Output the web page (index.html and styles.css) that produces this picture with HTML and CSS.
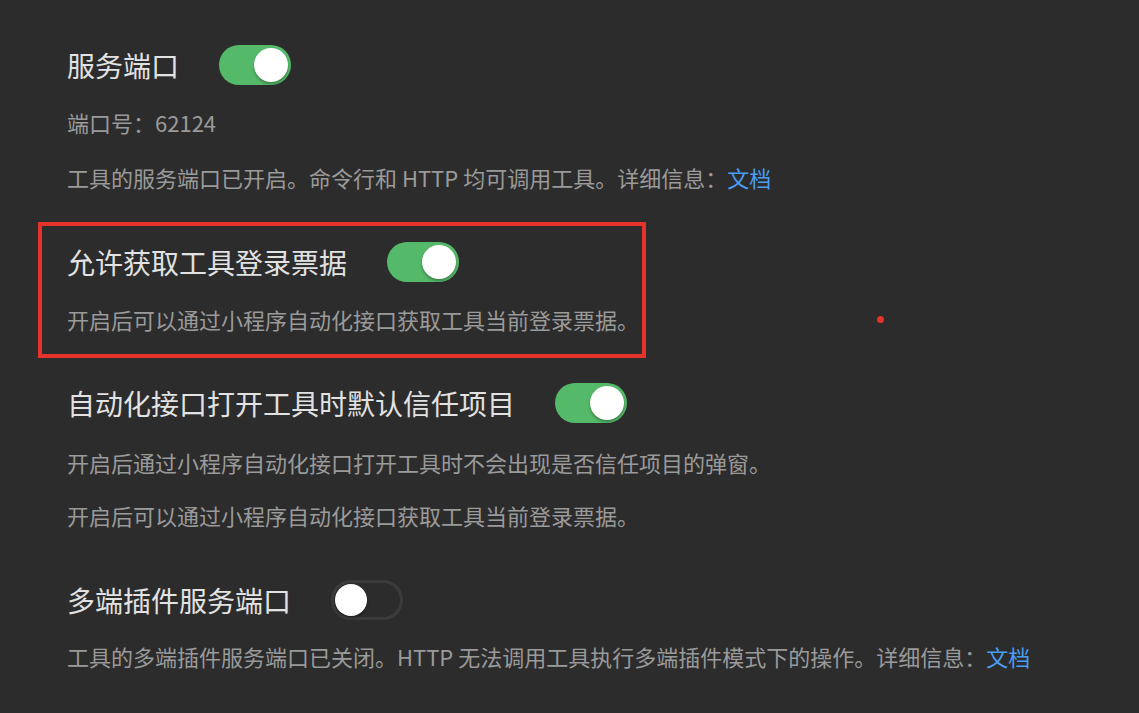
FILE: index.html
```html
<!DOCTYPE html>
<html lang="zh-CN">
<head>
<meta charset="utf-8">
<title>设置</title>
<link rel="stylesheet" href="styles.css">
</head>
<body>
<div class="page">
  <section class="group">
    <div class="row">
      <span class="title">服务端口</span>
      <span class="toggle on"><span class="knob"></span></span>
    </div>
    <p class="desc first">端口号：62124</p>
    <p class="desc">工具的服务端口已开启。命令行和 HTTP 均可调用工具。详细信息：<a class="link">文档</a></p>
  </section>

  <section class="group highlight">
    <div class="row">
      <span class="title">允许获取工具登录票据</span>
      <span class="toggle on"><span class="knob"></span></span>
    </div>
    <p class="desc first">开启后可以通过小程序自动化接口获取工具当前登录票据。</p>
  </section>

  <section class="group g3">
    <div class="row">
      <span class="title">自动化接口打开工具时默认信任项目</span>
      <span class="toggle on"><span class="knob"></span></span>
    </div>
    <p class="desc first">开启后通过小程序自动化接口打开工具时不会出现是否信任项目的弹窗。</p>
    <p class="desc tight">开启后可以通过小程序自动化接口获取工具当前登录票据。</p>
  </section>

  <section class="group g4">
    <div class="row">
      <span class="title">多端插件服务端口</span>
      <span class="toggle off"><span class="knob"></span></span>
    </div>
    <p class="desc first2">工具的多端插件服务端口已关闭。HTTP 无法调用工具执行多端插件模式下的操作。详细信息：<a class="link">文档</a></p>
  </section>

  <span class="dot"></span>
</div>
</body>
</html>
```

FILE: styles.css
```css
html, body {
  margin: 0;
  padding: 0;
  background: #2c2c2c;
}
body {
  font-family: "Noto Sans CJK SC", "Noto Sans", sans-serif;
  width: 1139px;
  height: 713px;
  overflow: hidden;
}
.page {
  position: relative;
  padding: 45px 0 0 67px;
  height: 100%;
  box-sizing: border-box;
}
.group {
  display: flex;
  flex-direction: column;
  align-items: flex-start;
}
.row {
  display: flex;
  align-items: center;
  gap: 40px;
  height: 40px;
}
.title {
  font-size: 28px;
  line-height: 40px;
  color: #e2e2e2;
  white-space: nowrap;
}
.desc {
  margin: 22px 0 0;
  padding-bottom: 3px;
  font-size: 22px;
  line-height: 30px;
  color: #9a9a9a;
  white-space: nowrap;
}
.desc.tight { margin-top: 20px; }
.link { color: #4a9ef3; }
.toggle {
  position: relative;
  width: 72px;
  height: 40px;
  border-radius: 20px;
  box-sizing: border-box;
  flex: none;
}
.toggle.on { background: #55b96a; }
.toggle.off {
  background: #2c2c2c;
  border: 3px solid #3b3b3b;
}
.knob {
  position: absolute;
  width: 34px;
  height: 34px;
  border-radius: 50%;
  background: #ffffff;
  top: 3px;
  right: 3px;
  box-shadow: 0 2px 3px rgba(0, 0, 0, 0.3);
}
.toggle.off .knob {
  width: 32px;
  height: 32px;
  top: 1px;
  left: 1px;
  right: auto;
}
.highlight {
  margin: 27px 0 0 -29px;
  width: 608px;
  box-sizing: border-box;
  border: 4px solid #e5322a;
  padding: 16px 0 17px 25px;
}
.g3 { margin-top: 25px; }
.g3 .desc.first { margin-top: 24px; }
.g4 { margin-top: 47px; }
.g4 .desc { margin-top: 21px; }
.dot {
  position: absolute;
  left: 877px;
  top: 316px;
  width: 7px;
  height: 7px;
  border-radius: 50%;
  background: #e5322a;
}
```
